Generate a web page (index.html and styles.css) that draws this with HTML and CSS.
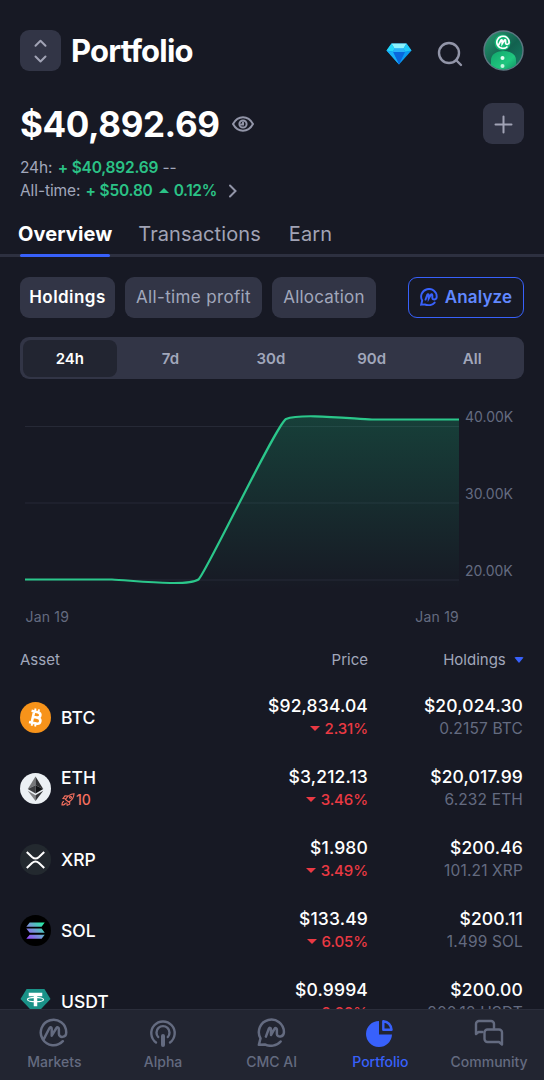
FILE: index.html
```html
<!DOCTYPE html>
<html lang="en">
  <head>
    <meta charset="UTF-8" />
    <meta name="viewport" content="width=device-width, initial-scale=1.0" />
    <title>Portfolio</title>
    <link rel="stylesheet" href="styles.css">
  </head>

  <body>
    <!-- Shared logo shapes -->
    <svg class="defs" width="0" height="0">
      <symbol id="cmc" viewBox="0 0 28 28">
        <path d="M4.600 20.400 10 9.900c.8-1.500 2.300-1.100 2.300.6v6.600l4.400-7.200c.9-1.400 2.500-1 2.500.8v4.600c0 4.200 7.100 4 7.100-1.300A12.300 12.300 0 1 0 23 22.400" />
      </symbol>
      <symbol id="cmcai" viewBox="0 0 28 28">
        <path d="M8.600 18 11.400 10.400c.6-1.400 2.100-1.100 2.100.5v5.600l3.400-6c.8-1.300 2.300-.9 2.300.7v4.200c0 3.500 6.800 3.500 6.800-1.700A12.100 12.100 0 1 0 3.400 19.600L1.800 25.900l5.700-.4C12 27.800 19 27.300 22.800 22.700" />
      </symbol>
    </svg>

    <header>
      <button class="icon-btn">
        <svg width="40" height="40" viewBox="0 0 40 40"><path d="m15.500 14.700 5-5 5 5M15.500 25.500l5 5 5-5" /></svg>
      </button>
      <h1>Portfolio</h1>
      <svg class="gem" width="26" height="22" viewBox="0 0 26 22">
        <path d="M5.500.5h15L25.500 7.500 13 21.500.5 7.500z" fill="#0a9af0" />
        <path d="M5.500.5h15l-3 5h-9z" fill="#8cf3fb" />
        <path d="M5.500.5 8.500 5.500 7 8.500.5 7.500z" fill="#25d9f8" />
        <path d="M20.500.5 17.500 5.500 19 8.500l6.500-1z" fill="#20caf6" />
        <path d="M8.500 5.500h9L19 9H7z" fill="#28b3f7" />
        <path d="M7 9h12l-6 12.500z" fill="#0868dc" />
        <path d="M.5 7.500 7 9l6 12.500z" fill="#18b1f7" />
      </svg>
      <svg class="search" width="26" height="26" viewBox="0 0 26 26"><circle cx="12" cy="12" r="10" /><path d="m19 19 5 5" /></svg>
      <svg class="avatar" width="41" height="41" viewBox="0 0 41 41">
        <defs>
          <linearGradient id="av" x1="0" y1="0" x2="1" y2="1"><stop offset="0" stop-color="#2a9d72" /><stop offset=".55" stop-color="#12614f" /><stop offset="1" stop-color="#168064" /></linearGradient>
          <linearGradient id="bodyFill" x1="0" y1="0" x2="1" y2="1"><stop offset="0" stop-color="#12a56c" /><stop offset=".6" stop-color="#20c77f" /><stop offset="1" stop-color="#108c61" /></linearGradient>
          <clipPath id="avClip"><circle cx="20.500" cy="20.500" r="19" /></clipPath>
        </defs>
        <circle cx="20.500" cy="20.500" r="19.500" fill="url(#av)" stroke="#5d7782" stroke-width="1.400" />
        <g clip-path="url(#avClip)">
          <circle cx="19.500" cy="12.500" r="8" fill="#12b775" />
          <path d="M8 41V30c0-12 25-12 25 0v11z" fill="url(#bodyFill)" />
        </g>
        <use href="#cmc" x="13" y="5.300" width="14" height="14" fill="none" stroke="#fff" stroke-width="3.400" />
        <circle cx="19.500" cy="28" r="2" fill="#e6fff2" />
        <circle cx="19.500" cy="36" r="2" fill="#c5f7df" />
      </svg>
    </header>

    <!-- Balance -->
    <section class="balance">
      <div class="total">
        <strong>$40,892.69</strong>
        <svg class="eye" width="22" height="16" viewBox="0 0 22 16"><path d="M1 8c5-9 15-9 20 0-5 9-15 9-20 0z" /><circle cx="11" cy="8" r="3.600" /><path d="M11 6.500v2H9" /></svg>
        <button class="icon-btn">
          <svg width="40" height="40" viewBox="0 0 40 40"><path d="M20.500 12.500v16M12.500 20.500h16" /></svg>
        </button>
      </div>
      <p class="day">24h: <b>+ $40,892.69</b> --</p>
      <p class="all">All-time: <b>+ $50.80</b> <i class="up"></i> <b class="pct">0.12%</b>
        <svg class="more" width="8" height="14" viewBox="0 0 8 14"><path d="m1 1.500 5.500 5.500L1 12.500" /></svg>
      </p>
    </section>

    <nav class="tabs">
      <a class="active">Overview</a>
      <a class="tx">Transactions</a>
      <a>Earn</a>
    </nav>

    <div class="chips">
      <button class="chip active">Holdings</button>
      <button class="chip profit">All-time profit</button>
      <button class="chip alloc">Allocation</button>
      <button class="analyze"><svg width="18" height="18"><use href="#cmcai" /></svg><span>Analyze</span></button>
    </div>

    <div class="range">
      <span class="active">24h</span>
      <span>7d</span>
      <span>30d</span>
      <span>90d</span>
      <span>All</span>
    </div>

    <!-- Chart -->
    <svg class="chart" width="544" height="251" viewBox="0 379 544 251">
      <defs>
        <linearGradient id="area" gradientUnits="userSpaceOnUse" x1="0" y1="416" x2="0" y2="590">
          <stop offset="0" stop-color="#16c784" stop-opacity=".22" />
          <stop offset="1" stop-color="#16c784" stop-opacity="0" />
        </linearGradient>
      </defs>
      <path class="grid" d="M25 426.500h434M25 503h434M25 580h434" />
      <path fill="url(#area)" d="M25 579.500H112C140 580.500 187 587 198 579 206 575 275 429 286 419 300 413 350 418 372 419.500H459V590H25z" />
      <path class="line" d="M25 579.500H112C132 580.300 187 587 198.500 579.500 206 573 276 425 286 419 300 413 350 418.500 372 419.500H459" />
      <text x="465" y="422">40.00K</text>
      <text x="465" y="499">30.00K</text>
      <text x="465" y="576">20.00K</text>
      <text class="date" x="25.500" y="622.300">Jan 19</text>
      <text class="date" x="459" y="622.300" text-anchor="end">Jan 19</text>
    </svg>

    <!-- Assets -->
    <div class="row head">
      <span>Asset</span>
      <span>Price</span>
      <span>Holdings <i class="sort"></i></span>
    </div>

    <main>
      <div class="row">
        <div class="coin">
          <svg width="31" height="31" viewBox="0 0 32 32">
            <circle cx="16" cy="16" r="16" fill="#f7931a" />
            <g transform="rotate(13 16 16)" fill="none" stroke="#fff" stroke-width="2.700"><path d="M10.500 10.200H17c4.500 0 4.500 5.600 0 5.600h-4.500H18c5 0 5 6.200 0 6.200h-7.500M13.300 10v12" /><path stroke-width="2" d="M14 7v3M17.700 7v3M14 22v3.200M17.700 22v3.200" /></g>
          </svg>
          <span>BTC</span>
        </div>
        <div class="num">$92,834.04<small class="down">2.31%</small></div>
        <div class="num">$20,024.30<small>0.2157 BTC</small></div>
      </div>
      <div class="row">
        <div class="coin">
          <svg width="31" height="31" viewBox="0 0 32 32">
            <circle cx="16" cy="16" r="16" fill="#ecf0f4" />
            <path d="M16 3.500 8 16.500l8-3.800z" fill="#77787a" /><path d="m16 3.500 8 13-8-3.800z" fill="#303134" />
            <path d="m8 16.500 8-3.800v8.500z" fill="#3c3d40" /><path d="m24 16.500-8-3.800v8.500z" fill="#121316" />
            <path d="m8 18.200 8 4.700v6z" fill="#818285" /><path d="m24 18.200-8 4.700v6z" fill="#343538" />
          </svg>
          <span>ETH<em><svg width="14" height="13" viewBox="0 0 14 13"><path d="M4.500 6.500C6.500 3 9 1 13 .7c0 3.800-2 6.300-5.300 8.300zM5 5.800 2 5.500l2-2.700 3 .2M8.700 8.300v2.900l-2.500 1.100-.5-2.800M3 8.200C1.500 8.500 1 10.500 1 12c1.700 0 3.200-.7 3.500-2.200" /><circle cx="9.500" cy="4.200" r="1" /></svg>10</em></span>
        </div>
        <div class="num">$3,212.13<small class="down">3.46%</small></div>
        <div class="num">$20,017.99<small>6.232 ETH</small></div>
      </div>
      <div class="row">
        <div class="coin">
          <svg width="31" height="31" viewBox="0 0 32 32">
            <circle cx="16" cy="16" r="16" fill="#23292f" />
            <path d="m7 8.200 5.400 5.200q3.600 3.200 7.200 0L25 8.200M7 24.800l5.400-5.200q3.600-3.200 7.200 0l5.400 5.200" fill="none" stroke="#fff" stroke-width="2.100" />
          </svg>
          <span>XRP</span>
        </div>
        <div class="num">$1.980<small class="down">3.49%</small></div>
        <div class="num">$200.46<small>101.21 XRP</small></div>
      </div>
      <div class="row">
        <div class="coin">
          <svg width="31" height="31" viewBox="0 0 32 32">
            <defs><linearGradient id="sol" gradientUnits="userSpaceOnUse" x1="7" y1="25" x2="25" y2="7"><stop offset="0" stop-color="#9945ff" /><stop offset=".5" stop-color="#719ed2" /><stop offset="1" stop-color="#19fb9b" /></linearGradient></defs>
            <circle cx="16" cy="16" r="16" fill="#000" />
            <path d="M10 7.800h15.500l-3.200 4.200H6.500zM6.500 14h15.800l3.200 4.200H10zM10 20.300h15.500l-3.200 4.200H6.500z" fill="url(#sol)" />
          </svg>
          <span>SOL</span>
        </div>
        <div class="num">$133.49<small class="down">6.05%</small></div>
        <div class="num">$200.11<small>1.499 SOL</small></div>
      </div>
      <div class="row">
        <div class="coin">
          <svg width="31" height="31" viewBox="0 0 32 32">
            <path d="M6.800 3h18.400l6.300 10.500L20 25.500h-8L.5 13.500z" fill="#1a9288" />
            <path d="M9 7h14v3.600h-5.200V21h-3.600V10.600H9z" fill="#fff" />
            <ellipse cx="16" cy="14" rx="8.300" ry="2.300" fill="none" stroke="#fff" stroke-width="1.200" />
          </svg>
          <span>USDT</span>
        </div>
        <div class="num">$0.9994<small class="down">0.02%</small></div>
        <div class="num">$200.00<small>200.12 USDT</small></div>
      </div>
    </main>

    <footer>
      <a><svg width="30" height="30" viewBox="0 0 30 30"><use href="#cmc" width="29" height="29" /></svg>Markets</a>
      <a><svg width="30" height="30" viewBox="0 0 30 30"><path d="M8 24.500a11.700 11.700 0 1 1 14 0" /><path d="M10.200 19a6.500 6.500 0 1 1 9.600 0" /><path stroke-width="4" d="M15 18v9" /></svg>Alpha</a>
      <a><svg width="30" height="30" viewBox="0 0 30 30"><use href="#cmcai" width="29" height="29" /></svg>CMC AI</a>
      <a class="active"><svg width="30" height="30" viewBox="0 0 30 30"><path class="solid" d="M14 3v13.500h13A13 13 0 1 1 14 3z" /><path d="M18.300 3.300v8.400h8.200c-.5-4.700-3.500-7.700-8.200-8.400z" /></svg>Portfolio</a>
      <a><svg width="30" height="30" viewBox="0 0 30 30"><path d="M8.500 14H4.500l-2.500 2V6a3 3 0 0 1 3-3h12a3 3 0 0 1 3 3v5" /><path d="M13.500 11.500H25a3 3 0 0 1 3 3v12l-3-2.500H13.500a3 3 0 0 1-3-3v-6.500a3 3 0 0 1 3-3z" /></svg>Community</a>
    </footer>
  </body>
</html>
```

FILE: styles.css
```css
* {
  margin: 0;
  padding: 0;
  box-sizing: border-box;
  font-family: 'Inter', sans-serif;
}

body {
  background-color: #171924;
  color: #fff;
  height: 1080px;
  overflow: hidden;
  display: flex;
  flex-direction: column;
}

svg {
  display: block;
  flex-shrink: 0;
}

button {
  border: none;
  color: #a1a7bb;
}

.defs {
  position: absolute;
}

/* Header */
header {
  display: flex;
  align-items: center;
  height: 41px;
  margin: 30px 20px 0;
}

.icon-btn {
  width: 41px;
  height: 41px;
  background-color: #323546;
  border-radius: 9px;
}

.icon-btn svg {
  fill: none;
  stroke: #a1a3b5;
  stroke-width: 2;
  stroke-linecap: round;
  stroke-linejoin: round;
}

h1 {
  font-size: 31px;
  line-height: 40px;
  letter-spacing: -0.8px;
  margin-left: 10px;
  flex: 1;
}

.gem {
  margin: 6px 25px 0 0;
}

.search,
.eye,
.more {
  fill: none;
  stroke: #9295a8;
  stroke-width: 2;
  stroke-linecap: round;
}

.search {
  margin: 7px 20px 0 0;
  stroke-width: 2.4;
}

/* Balance */
.balance {
  margin: 32px 20px 0;
  height: 97px;
  color: #a1a7bb;
}

.total {
  display: flex;
  align-items: center;
  height: 41px;
}

.total strong {
  color: #fff;
  font-size: 35px;
  letter-spacing: -0.4px;
}

.total .eye {
  margin-left: 12px;
}

.total .icon-btn {
  margin-left: auto;
}

.balance p {
  display: flex;
  align-items: center;
  white-space: pre;
  font-size: 15.5px;
  letter-spacing: -0.1px;
  line-height: 23px;
}

.day {
  margin-top: 12px;
}

.balance b {
  color: #2bc286;
  font-weight: 600;
  letter-spacing: -0.2px;
}

.day b,
.all b {
  margin-left: 1px;
}

.up {
  border: 5px solid transparent;
  border-top: none;
  border-bottom: 5px solid #2bc286;
  margin-left: 6px;
}

.all .pct {
  margin-left: 5px;
  letter-spacing: -0.4px;
}

.more {
  margin-left: 12px;
}

/* Tabs */
.tabs {
  display: flex;
  height: 54px;
  padding-left: 18px;
  border-bottom: 3px solid #2d3040;
  margin-top: 3px;
}

.tabs a {
  color: #a1a3b5;
  font-size: 20px;
  letter-spacing: 0.1px;
  line-height: 62px;
  height: 51px;
  position: relative;
  margin-right: 26px;
}

.tabs .tx {
  margin-right: 28px;
}

.tabs .active {
  color: #fff;
  font-weight: 700;
}

.tabs .active::after {
  content: "";
  position: absolute;
  left: 2px;
  right: 2px;
  bottom: -3px;
  height: 3px;
  border-radius: 2px;
  background-color: #3861fb;
}

/* Filters */
.chips {
  display: flex;
  gap: 10px;
  margin: 20px 20px 0;
}

.chips button {
  height: 41px;
  border-radius: 9px;
  font-size: 17px;
  padding-bottom: 1px;
}

.chip {
  background-color: #323546;
  width: 95px;
}

.chips .active {
  color: #fff;
  font-weight: 600;
  letter-spacing: 0.45px;
}

.chips .profit {
  width: 137px;
  letter-spacing: 0.35px;
}

.chips .alloc {
  width: 104px;
  letter-spacing: 0.2px;
}

.analyze {
  display: flex;
  align-items: center;
  justify-content: center;
  gap: 7px;
  width: 116px;
  margin-left: auto;
  background: none;
  border: 1.5px solid #3861fb;
  color: #6188ff;
  font-weight: 600;
  letter-spacing: 0.15px;
}

.analyze svg {
  fill: none;
  stroke: #3861fb;
  stroke-width: 3;
  stroke-linecap: round;
}

.range {
  display: grid;
  grid-template-columns: repeat(5, 1fr);
  gap: 7px;
  height: 42px;
  margin: 19px 20px 0;
  padding: 3px 5px 3px 3px;
  border-radius: 9px;
  background-color: #323546;
}

.range span {
  color: #a1a7bb;
  font-size: 15px;
  font-weight: 600;
  line-height: 37px;
  text-align: center;
  border-radius: 8px;
}

.range .active {
  color: #fff;
  background-color: #222531;
}

/* Chart */
.chart text {
  font-size: 14px;
  fill: #646b80;
}

.chart .date {
  letter-spacing: 0.2px;
}

.grid {
  stroke: #262936;
}

.line {
  fill: none;
  stroke: #2bc78b;
  stroke-width: 2.2;
}

/* Asset table */
.row {
  display: grid;
  grid-template-columns: 148px 200px 155px;
  align-items: center;
  height: 71px;
  margin: 0 20px;
}

.head {
  height: 50px;
  margin-top: 4px;
  margin-bottom: -2px;
  font-size: 15px;
  color: #a1a7bb;
}

.head span + span {
  text-align: right;
}

.sort {
  display: inline-block;
  border: 5px solid transparent;
  border-bottom: none;
  border-top: 6px solid #3861fb;
  border-radius: 2px;
  margin-left: 4px;
  margin-right: -1px;
  vertical-align: 2px;
}

.coin {
  display: flex;
  align-items: center;
  gap: 10px;
  font-size: 17.5px;
  font-weight: 500;
}

.coin em {
  display: flex;
  align-items: center;
  gap: 1px;
  color: #f6705f;
  font-size: 14px;
  font-style: normal;
  line-height: 23px;
}

.coin em svg {
  fill: none;
  stroke: #f6705f;
  stroke-width: 1.1;
}

.num {
  font-size: 17.5px;
  font-weight: 500;
  letter-spacing: 0.15px;
  line-height: 23px;
  text-align: right;
  padding-bottom: 1px;
}

.num small {
  display: block;
  color: #646b80;
  font-size: 15.5px;
  font-weight: 400;
}

.num small.down {
  color: #ea3943;
  font-size: 15px;
  font-weight: 500;
  letter-spacing: -0.1px;
}

.down::before {
  content: "";
  display: inline-block;
  border: 5px solid transparent;
  border-bottom: none;
  border-top-color: #ea3943;
  margin-right: 5px;
  vertical-align: 3px;
}

/* Bottom navigation */
footer {
  position: fixed;
  left: 0;
  right: 0;
  bottom: 0;
  height: 71px;
  display: grid;
  grid-template-columns: repeat(5, 108.7px);
  background-color: #222531;
  border-top: 1px solid #2b2e3b;
}

footer a {
  display: flex;
  flex-direction: column;
  align-items: center;
  padding-top: 8px;
  color: #646b80;
  font-size: 14px;
  font-weight: 500;
  line-height: 28px;
}

footer svg {
  fill: none;
  stroke: #646b80;
  stroke-width: 2.4;
  stroke-linecap: round;
  stroke-linejoin: round;
}

footer .active {
  color: #3861fb;
}

footer .active svg {
  stroke: #3861fb;
}

footer .solid {
  fill: #3861fb;
  stroke: none;
}
```
